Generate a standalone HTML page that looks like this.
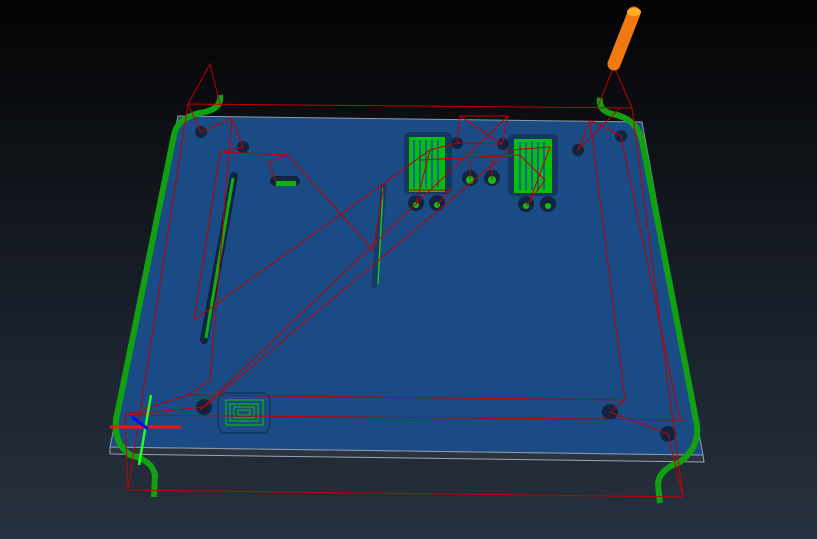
<!DOCTYPE html>
<html><head><meta charset="utf-8"><style>
html,body{margin:0;padding:0;width:817px;height:539px;overflow:hidden;background:linear-gradient(#030303 0%,#11151b 35%,#1d2530 70%,#27303e 100%);}
svg{position:absolute;left:0;top:0}
</style></head><body>
<svg width="817" height="539" viewBox="0 0 817 539">
<path d="M110,447 L703,455 L704,462 L110,454 Z" fill="#2b3340" stroke="#9aa3ad" stroke-width="1"/>
<path d="M178,116 L642,122 L703,455 L110,447 Z" fill="#1b4b85" stroke="#8d98a6" stroke-width="1"/>
<path d="M220,95 Q222,108 205,112 Q178,116 174,135 L118,410 Q110,440 130,455 Q152,460 155,475 L154,497" fill="none" stroke="#10a010" stroke-width="6"/>
<path d="M600,98 Q598,110 612,114 Q636,118 642,140 L696,420 Q702,445 680,462 Q658,470 658,485 L660,503" fill="none" stroke="#10a010" stroke-width="6"/>
<path d="M234,176 L204,340" stroke="#0f2440" stroke-width="8" stroke-linecap="round"/>
<path d="M233,178 L206,338" stroke="#10b010" stroke-width="3"/>
<path d="M384,186 L374,285" stroke="#153a68" stroke-width="6" stroke-linecap="round"/>
<path d="M383,188 L378,284" stroke="#20c020" stroke-width="1.5"/>
<rect x="270" y="176" width="30" height="10" rx="5" fill="#0f2440"/>
<rect x="276" y="181" width="20" height="5" fill="#10b010"/>
<rect x="404" y="132" width="48" height="62" rx="6" fill="#14365f"/>
<rect x="409" y="137" width="36" height="55" fill="#06c006"/>
<g stroke="#1460a0" stroke-width="2"><path d="M414,140V188M420,140V188M426,140V188M432,140V188M438,140V188"/></g>
<rect x="508" y="134" width="50" height="62" rx="6" fill="#14365f"/>
<rect x="514" y="139" width="38" height="54" fill="#06c006"/>
<g stroke="#1460a0" stroke-width="2"><path d="M520,142V190M526,142V190M532,142V190M538,142V190M544,142V190"/></g>
<g fill="#10243f">
<circle cx="201" cy="132" r="6"/><circle cx="243" cy="147" r="6"/><circle cx="578" cy="150" r="6"/><circle cx="621" cy="136" r="6"/>
<circle cx="204" cy="407" r="8"/><circle cx="610" cy="412" r="8"/><circle cx="668" cy="434" r="8"/>
<circle cx="416" cy="203" r="8"/><circle cx="437" cy="203" r="8"/><circle cx="470" cy="178" r="8"/><circle cx="492" cy="178" r="8"/><circle cx="526" cy="204" r="8"/><circle cx="548" cy="204" r="8"/>
<circle cx="457" cy="143" r="6"/><circle cx="503" cy="144" r="6"/>
</g>
<g fill="#10c010">
<circle cx="416" cy="205" r="3"/><circle cx="437" cy="205" r="3"/><circle cx="470" cy="180" r="4"/><circle cx="492" cy="180" r="4"/><circle cx="526" cy="206" r="3"/><circle cx="548" cy="206" r="3"/>
</g>
<rect x="218" y="393" width="52" height="40" rx="8" fill="none" stroke="#143a66" stroke-width="2"/>
<g fill="none" stroke="#12b012" stroke-width="1.2">
<path d="M226,400H263V425H226Z"/><path d="M230,404H258V421H230Z"/><path d="M234,407H254V418H234Z"/><path d="M238,410H250V415H238Z"/>
</g>
<g fill="none" stroke="#c00000" stroke-width="1">
<path d="M188,104 L632,108 L683,497 L128,490 Z"/>
<path d="M188,104 L210,64 L220,104"/>
<path d="M598,106 L614,66 L632,108"/>
<path d="M188,104 L201,132 L232,118 L243,147"/>
<path d="M620,108 L578,150 L590,120 L621,136 L680,420"/>
<path d="M232,118 L210,380 L188,395 L125,415 L685,420"/>
<path d="M243,147 L220,152 L194,320 L430,150 L457,143 L503,144"/>
<path d="M220,152 L288,155 L373,250 L384,186"/>
<path d="M288,155 L268,162 L276,181"/>
<path d="M125,415 L204,407 L510,150 L550,147 L530,200"/>
<path d="M188,395 L625,400 L610,412 L668,434 L683,497"/>
<path d="M460,116 L508,116 L502,144 L460,116 L457,143"/>
<path d="M508,116 L200,410"/>
<path d="M420,160 L520,155 L545,180 L526,206"/>
<path d="M410,190 L450,190 L437,205 M430,150 L416,205"/>
<path d="M470,160 L470,180 M492,158 L492,180"/>
<path d="M625,400 L590,120"/>
<path d="M128,490 L125,415"/>
</g>
<path d="M151,395 L139,465" stroke="#20ff20" stroke-width="2.5"/>
<path d="M110,427 L181,427" stroke="#ff1010" stroke-width="3"/>
<path d="M132,417 L148,429" stroke="#0010ff" stroke-width="3"/>
<path d="M614,64 L634,13" stroke="#f07a10" stroke-width="13" stroke-linecap="round"/>
<ellipse cx="634" cy="12" rx="7" ry="4" fill="#ffb020"/>
</svg>
</body></html>
